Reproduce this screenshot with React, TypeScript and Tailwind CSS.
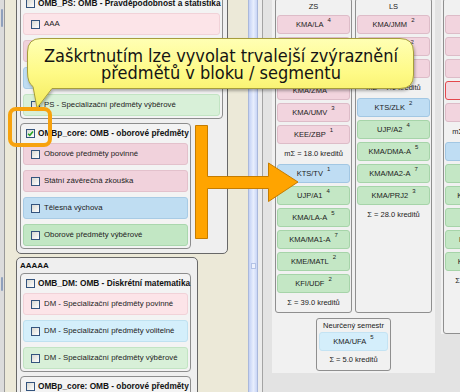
import React from "react";

type LeftTone = "pink" | "pinkLight" | "blue" | "blueLight" | "green" | "greenLight";

const leftTone: Record<LeftTone, string> = {
  pink: "bg-[#f1d2dc] border-[#e3c1cc]",
  pinkLight: "bg-[#fce4e8] border-[#f1d2d8]",
  blue: "bg-[#bfddf2] border-[#a8cbe5]",
  blueLight: "bg-[#d4effb] border-[#bfe1f0]",
  green: "bg-[#c2e7c4] border-[#aad7ae]",
  greenLight: "bg-[#d8f0d8] border-[#c2e4c3]",
};

type CardTone = "pink" | "blue" | "green" | "cyan" | "alert";

const cardTone: Record<CardTone, string> = {
  pink: "bg-[#f2d4de] border-[#ddbcc8]",
  blue: "bg-[#bfddf3] border-[#a2c7e3]",
  green: "bg-[#c4e7c5] border-[#a6d4a9]",
  cyan: "bg-[#d4eefb] border-[#c4e3f3]",
  alert: "bg-[#f4d8e0] border-[#e4484d]",
};

type Course = { code: string; cr: number; tone: CardTone };
type Row = Course | { note: string };

const Check = ({ checked }: { checked?: boolean }) => (
  <span className="flex h-[9px] w-[9px] shrink-0 items-center justify-center border border-[#34547e] bg-[linear-gradient(135deg,#d8d8d2,#ffffff)]">
    {checked && (
      <svg viewBox="0 0 8 8" className="h-[7px] w-[7px]">
        <path d="M1.2 4.2 L3.2 6.1 L6.9 1.7" fill="none" stroke="#23a323" strokeWidth="1.7" />
      </svg>
    )}
  </span>
);

const Group = ({
  title,
  width,
  checked,
  items,
}: {
  title: string;
  width: string;
  checked?: boolean;
  items: [string, LeftTone][];
}) => (
  <div className={`flex flex-col rounded-[4px] border border-[#8d8d8d] bg-[#f3f3f3] px-[2px] pb-[2px] ${width}`}>
    <div className="flex h-[19px] items-center gap-[3px] whitespace-nowrap pl-[3px] text-[8.3px] font-bold text-[#111]">
      <Check checked={checked} />
      {title}
    </div>
    <div className="flex flex-col gap-[5px]">
      {items.map(([label, t]) => (
        <div
          key={label}
          className={`flex h-[22px] items-center gap-[4px] whitespace-nowrap rounded-[3px] border pl-[7px] text-[7.8px] text-[#222] ${leftTone[t]}`}
        >
          <Check />
          {label}
        </div>
      ))}
    </div>
  </div>
);

const Section = ({ title, width, children }: { title?: string; width: string; children: React.ReactNode }) => (
  <div className={`flex flex-col rounded-[5px] border border-[#686868] bg-[#efefef] pb-[4px] pl-[3px] ${width}`}>
    {title ? (
      <div className="flex h-[15px] items-center text-[8px] font-bold text-[#111]">{title}</div>
    ) : (
      <div className="h-[2px]" />
    )}
    <div className="flex flex-col gap-[4px]">{children}</div>
  </div>
);

const Card = ({ code, cr, tone }: Course) => (
  <div
    className={`flex h-[19px] shrink-0 items-center justify-center whitespace-nowrap rounded-[3px] border text-[7.5px] text-[#1c1c1c] ${cardTone[tone]}`}
  >
    <span>{code}</span>
    <span className="ml-[4px] mt-[1px] self-start text-[6px] leading-[7px]">{cr}</span>
  </div>
);

const Note = ({ text, h = "h-[14px]" }: { text: string; h?: string }) => (
  <div className={`flex ${h} items-center justify-center whitespace-nowrap text-[7.5px] text-[#1c1c1c]`}>{text}</div>
);

const Column = ({ title, rows, extra = "" }: { title: string; rows: Row[]; extra?: string }) => (
  <div className={`flex w-[77px] flex-col rounded-[3px] border border-[#8f8f8f] bg-[#f1f1f1] px-[1px] pb-[2px] ${extra}`}>
    <div className="flex h-[16px] items-center justify-center text-[7.5px] text-[#1c1c1c]">{title}</div>
    <div className="flex flex-col gap-[3px]">
      {rows.map((r, i) => ("note" in r ? <Note key={i} text={r.note} /> : <Card key={i} {...r} />))}
    </div>
  </div>
);

const zs: Row[] = [
  { code: "KMA/LA", cr: 4, tone: "pink" },
  { code: "KMA/M1", cr: 5, tone: "pink" },
  { code: "KMA/ZI", cr: 3, tone: "pink" },
  { code: "KMA/ZMA", cr: 2, tone: "pink" },
  { code: "KMA/UMV", cr: 3, tone: "pink" },
  { code: "KEE/ZBP", cr: 1, tone: "pink" },
  { note: "mΣ = 18.0 kreditů" },
  { code: "KTS/TV", cr: 1, tone: "blue" },
  { code: "UJP/A1", cr: 4, tone: "green" },
  { code: "KMA/LA-A", cr: 5, tone: "green" },
  { code: "KMA/MA1-A", cr: 7, tone: "green" },
  { code: "KME/MATL", cr: 2, tone: "green" },
  { code: "KFI/UDF", cr: 2, tone: "green" },
  { note: "Σ = 39.0 kreditů" },
];

const ls: Row[] = [
  { code: "KMA/JMM", cr: 2, tone: "pink" },
  { code: "KMA/PSA", cr: 2, tone: "pink" },
  { code: "KMA/M2", cr: 3, tone: "pink" },
  { note: "mΣ = 7.0 kreditů" },
  { code: "KTS/ZLK", cr: 2, tone: "blue" },
  { code: "UJP/A2", cr: 4, tone: "green" },
  { code: "KMA/DMA-A", cr: 5, tone: "green" },
  { code: "KMA/MA2-A", cr: 7, tone: "green" },
  { code: "KMA/PRJ2", cr: 3, tone: "green" },
  { note: "Σ = 28.0 kreditů" },
];

const zs2: Row[] = [
  { code: "KMA/MA3", cr: 5, tone: "pink" },
  { code: "KMA/NM", cr: 4, tone: "pink" },
  { code: "KMA/PST", cr: 5, tone: "pink" },
  { code: "KMA/TGD", cr: 4, tone: "alert" },
  { code: "KMA/OA", cr: 3, tone: "pink" },
  { note: "mΣ = 21.0 kreditů" },
  { code: "KTS/TV3", cr: 1, tone: "blue" },
  { code: "UJP/A3", cr: 4, tone: "green" },
  { code: "KMA/MA3-A", cr: 5, tone: "green" },
  { code: "KIV/PPA1", cr: 6, tone: "green" },
  { code: "KMA/NM-A", cr: 2, tone: "green" },
  { code: "KMA/PST-A", cr: 2, tone: "green" },
  { note: "Σ = 41.0 kreditů" },
];

export default function App() {
  return (
    <div className="relative flex h-[392px] w-[460px] overflow-hidden bg-[#ece9d8] font-['Liberation_Sans',Arial,sans-serif] text-[#1c1c1c]">
      {/* outer edge */}
      <div className="flex w-[5px] shrink-0 flex-col border-r border-[#9a9a9a] bg-[#dcdcdc]">
        <div className="ml-[1px] mt-[9px] h-[18px] w-[2px] rounded-full bg-[#8fa0bc]" />
        <div className="ml-[1px] mt-[250px] h-[14px] w-[2px] rounded-full bg-[#8fa0bc]" />
      </div>

      {/* blocks */}
      <div className="w-[243px] shrink-0">
        <div className="-mt-[10px] flex flex-col gap-[3px] pl-[11px]">
          <Section width="w-[212px]">
            <Group
              width="w-[203px]"
              title="OMB_PS: OMB - Pravděpodobnost a statistika"
              items={[
                ["AAA", "pinkLight"],
                ["PS - Specializační předměty povinné", "pink"],
                ["PS - Specializační předměty volitelné", "blue"],
                ["PS - Specializační předměty výběrové", "greenLight"],
              ]}
            />
            <Group
              width="w-[171px]"
              checked
              title="OMBp_core: OMB - oborové předměty"
              items={[
                ["Oborové předměty povinné", "pink"],
                ["Státní závěrečná zkouška", "pink"],
                ["Tělesná výchova", "blue"],
                ["Oborové předměty výběrové", "green"],
              ]}
            />
          </Section>
          <Section width="w-[182px]" title="AAAAA">
            <Group
              width="w-[171px]"
              title="OMB_DM: OMB - Diskrétní matematika"
              items={[
                ["DM - Specializační předměty povinné", "pinkLight"],
                ["DM - Specializační předměty volitelné", "blueLight"],
                ["DM - Specializační předměty výběrové", "greenLight"],
              ]}
            />
            <Group
              width="w-[171px]"
              title="OMBp_core: OMB - oborové předměty"
              items={[
                ["Oborové předměty povinné", "pink"],
                ["Státní závěrečná zkouška", "pink"],
              ]}
            />
          </Section>
        </div>
      </div>

      {/* scrollbar + splitter */}
      <div className="flex w-[10px] shrink-0 flex-col items-center border-x border-[#aab8db] bg-[linear-gradient(to_right,#c3d1f5,#e8eefd_55%,#c9d6f7)]">
        <div className="mt-[263px] h-[6px] w-[5px] border border-[#b3c2e6] bg-[#eef2fd]" />
      </div>
      <div className="w-[5px] shrink-0 border-r border-[#a3a3a3] bg-[#ececec]" />

      {/* plan */}
      <div className="flex-1 bg-[#e3e3e3]">
        <div className="-mt-[5px] flex items-start gap-[6px] pl-[9px]">
          <div className="flex flex-col items-center bg-[#f1f1f1] px-[3px] pb-[2px] pt-[3px]">
            <div className="flex gap-[3px]">
              <Column title="ZS" rows={zs} />
              <Column title="LS" rows={ls} />
            </div>
            <div className="mt-[5px] flex w-[75px] flex-col rounded-[3px] border border-[#8f8f8f] bg-[#f1f1f1] px-[2px] pb-[2px]">
              <Note text="Neurčený semestr" h="h-[13px]" />
              <Card code="KMA/UFA" cr={5} tone="cyan" />
              <Note text="Σ = 5.0 kreditů" h="h-[17px]" />
            </div>
          </div>
          <div className="bg-[#f1f1f1] pl-[2px] pt-[3px]">
            <Column title="ZS" rows={zs2} extra="min-h-[336px]" />
          </div>
        </div>
      </div>

      {/* overlays */}
      <svg className="pointer-events-none absolute left-0 top-0" width="460" height="392" viewBox="0 0 460 392">
        <defs>
          <linearGradient id="bubble" x1="0" y1="0" x2="0" y2="1">
            <stop offset="0" stopColor="#ffffb4" />
            <stop offset="0.5" stopColor="#fefa86" />
            <stop offset="1" stopColor="#f3ea5e" />
          </linearGradient>
          <filter id="shadow" x="-5%" y="-20%" width="112%" height="160%">
            <feDropShadow dx="1" dy="2" stdDeviation="1.4" floodColor="#000" floodOpacity="0.3" />
          </filter>
        </defs>
        <path
          d="M41 38.5 H400 Q413.5 38.5 413.5 52 V75 Q413.5 88.5 400 88.5 H52 L37 108 L33 86.5 Q27.5 83 27.5 72 V52 Q27.5 38.5 41 38.5 Z"
          fill="url(#bubble)"
          stroke="#a69d3c"
          strokeWidth="1"
          filter="url(#shadow)"
        />
        <rect x="10" y="109" width="40" height="36" rx="6" fill="none" stroke="#f7a20d" strokeWidth="4" />
        <path
          d="M195.5 125.5 H207.5 V176.5 H268.5 V163 L298 182 L268.5 201.5 V188.5 H207.5 V238.5 H195.5 Z"
          fill="#ffa400"
          stroke="#c57c00"
          strokeWidth="1"
        />
      </svg>
      <div className="pointer-events-none absolute left-[28px] top-[38px] flex h-[51px] w-[386px] flex-col items-center justify-center whitespace-nowrap font-['DejaVu_Sans_Condensed','DejaVu_Sans',sans-serif] text-[18px] leading-[17px] text-[#141414]">
        <span>Zaškrtnutím lze vyvolat trvalejší zvýraznění</span>
        <span>předmětů v bloku / segmentu</span>
      </div>
    </div>
  );
}
